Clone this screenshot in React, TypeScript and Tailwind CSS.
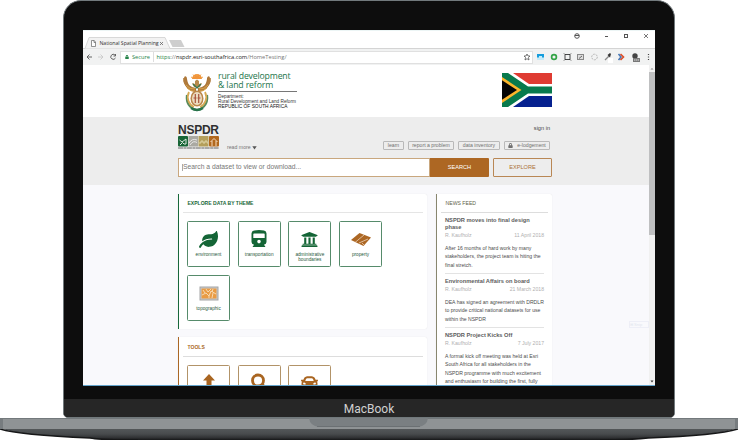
import React from "react";
import { FaLeaf, FaUniversity, FaCar, FaLock } from "react-icons/fa";

const sans = "font-['Liberation_Sans',Arial,sans-serif]";

function CoatOfArms() {
  return (
    <svg width="28" height="38" viewBox="0 0 28 38">
      <path d="M1 5 C1 1 4 2 4 5 C5 12 8 13 13 14 L13 18 C7 18 1 13 1 5Z M27 5 C27 1 24 2 24 5 C23 12 20 13 15 14 L15 18 C21 18 27 13 27 5Z" fill="#ad7638" />
      <path d="M1.500 4V7Q3 13 9 15M26.500 4V7Q25 13 19 15" stroke="#b07b3c" strokeWidth="2.600" fill="none" />
      <path d="M3 11 Q7 16 12 15 M25 11 Q21 16 16 15 M4 14 Q8 18 12 17 M24 14 Q20 18 16 17" stroke="#d9a54b" strokeWidth="1" fill="none" />
      <path d="M9 5 A5 5 0 0 1 19 5Z" fill="#f0933a" />
      <path d="M8 3 L10 4 M10 0.5 L11.5 3 M14 0 V2 M18 0.5 L16.500 3 M20 3 L18 4" stroke="#f2a650" strokeWidth="1" />
      <path d="M12 7 L14 5.500 L16 7 L16 10 L19 9 L17 13 L11 13 L9 9 L12 10Z" fill="#b8894a" />
      <path d="M10 10 L14 14 L18 10" stroke="#35764f" strokeWidth="1.300" fill="none" />
      <path d="M4 21 C3 29 6 34 14 36 C22 34 25 29 24 21" stroke="#5a8b5d" strokeWidth="2.200" fill="none" />
      <path d="M6 18 C3 24 6 31 11 33 M22 18 C25 24 22 31 17 33" stroke="#d6aa54" strokeWidth="1.800" fill="none" />
      <ellipse cx="14" cy="24.500" rx="6.500" ry="8" fill="#bb884c" />
      <ellipse cx="14" cy="24.500" rx="5" ry="6.500" fill="#ecdcc0" />
      <path d="M12.300 20 V29 M15.700 20 V29 M10.500 24 H13.500 M14.500 24 H17.500" stroke="#a8543c" strokeWidth="1.200" />
      <path d="M8 34 Q14 38 20 34" stroke="#28734b" strokeWidth="2.400" fill="none" />
    </svg>
  );
}

function Flag() {
  return (
    <svg width="50" height="34" viewBox="0 0 50 34">
      <rect width="50" height="34" fill="#fff" />
      <path d="M11 0H50V11H27Z" fill="#df3b32" />
      <path d="M11 34H50V23H27Z" fill="#06218f" />
      <path d="M0 0H6L26 13.500H50V20.500H26L6 34H0Z" fill="#087a4d" />
      <path d="M0 4L19.500 17L0 30Z" fill="#fcb52b" />
      <path d="M0 7.300L15 17L0 26.700Z" fill="#050505" />
    </svg>
  );
}

function ThemeGlyphs() {
  return (
    <svg width="41" height="13" viewBox="0 0 41 13">
      <rect width="10" height="10.500" rx="1" fill="#176536" />
      <rect x="10.500" width="9.500" height="10.500" fill="#aaa9a2" />
      <rect x="20.500" width="10" height="10.500" fill="#b49f5b" />
      <rect x="31" width="10" height="10.500" rx="1" fill="#b1681e" />
      <path d="M1.500 4L4 6L8 3V8H6L4.500 6.500L2 9" stroke="#dce9df" fill="none" strokeWidth="1" />
      <path d="M11 7Q14 2 19 4M12 9Q15 4 19 6.500" stroke="#eee" fill="none" strokeWidth=".9" />
      <path d="M21 7H23V5H25V7H27V5H29V7H30" stroke="#e9dfb8" fill="none" strokeWidth=".8" />
      <path d="M32.500 6L36 2.500L39.500 6M34 5V10M38 5V10" stroke="#f5dbc0" fill="none" strokeWidth="1" />
      <path d="M0 12H41" stroke="#444" strokeWidth=".8" strokeDasharray="5 .5 3 .4" />
    </svg>
  );
}

function TrainIcon() {
  return (
    <svg width="16" height="18" viewBox="0 0 16 18">
      <path fillRule="evenodd" d="M3 .5Q8 -.5 13 .5Q15.500 1 15.500 3.500V12Q15.500 14 13 14.700L14.500 17H1.500L3 14.700Q.5 14 .5 12V3.500Q.5 1 3 .5ZM3 3.500Q2.300 3.500 2.300 4.200V8H13.700V4.200Q13.700 3.500 13 3.500ZM8 9.800A1.800 1.800 0 1 0 8 13.400A1.800 1.800 0 1 0 8 9.800Z" fill="currentColor" />
    </svg>
  );
}

function PropertyIcon() {
  return (
    <svg width="20" height="13" viewBox="0 0 20 13">
      <path d="M0 7L8.500 0L20 4.500L12.500 13Z" fill="#ac6724" />
      <path d="M4 9.500L13 2M8 10L17 6M11 10L13 12" stroke="#f5e1ce" strokeWidth=".7" />
    </svg>
  );
}

function MapIcon() {
  return (
    <svg width="20" height="15" viewBox="0 0 20 15">
      <rect x=".5" y=".5" width="19" height="14" fill="#a6a6a6" />
      <rect x="1.500" y="1.500" width="17" height="12" fill="#c8c8c8" />
      <rect x="2.500" y="2.500" width="15" height="10" fill="#e99b44" />
      <path d="M3 9L7 7L10 10L12 5L17 8M7 3L9 6L12 3M10 10V12M14 3L13 6M4 4L6 7M14 7L13 12" stroke="#fae9cc" strokeWidth=".8" fill="none" />
    </svg>
  );
}

function Tile({ label, icon, brown = false }: { label?: React.ReactNode; icon: React.ReactNode; brown?: boolean }) {
  return (
    <div className={`flex h-[46px] w-[43px] shrink-0 flex-col items-center rounded-[1.5px] border bg-white ${brown ? "border-[#b29368] text-[#a96521]" : "border-[#568b6b] text-[#146536]"}`}>
      <div className="mt-[7px] flex h-[20px] items-center">{icon}</div>
      {label && <div className="mt-[2.500px] text-center text-[4.700px] leading-[5px] whitespace-nowrap text-[#28573a]">{label}</div>}
    </div>
  );
}

function Chip({ children, className }: { children: React.ReactNode; className: string }) {
  return <div className={`flex h-[9px] items-center justify-center rounded-[1px] border border-[#b9b9b9] text-[5.150px] leading-[7px] whitespace-nowrap text-[#707070] ${className}`}>{children}</div>;
}

function News({ title, date, lines, first = false }: { title: React.ReactNode; date: string; lines: string[]; first?: boolean }) {
  return (
    <article className={`mx-[8px] pt-[4px] ${first ? "" : "border-t border-[#e3e3e3]"}`}>
      <h3 className="text-[5.700px] leading-[6.500px] font-bold whitespace-nowrap text-[#5d5d5d]">{title}</h3>
      <div className="flex h-[11px] items-center justify-between pt-[1px] text-[5.150px] whitespace-nowrap text-[#b0b0b0]"><span>R. Kaufholz</span><span>{date}</span></div>
      <div className="mt-[2.500px] pb-[3.500px] text-[5.120px] leading-[8.500px] whitespace-nowrap text-[#4c4c4c]">
        {lines.map((line) => <div key={line}>{line}</div>)}
      </div>
    </article>
  );
}

function BrowserChrome() {
  return (
    <div className="h-[35px] shrink-0">
      <div className="relative flex h-[19px] bg-white">
        <svg className="absolute left-0 top-0" width="572" height="19" viewBox="0 0 572 19">
          <path d="M0 .5H572" stroke="#ecf5f5" />
          <path d="M0 18.500H2L6 7.500H82L87 18.500H572V19H0Z" fill="#f2f2f2" stroke="#cfcfcf" strokeWidth=".8" />
          <path d="M86 10H98L101.500 17H89.500Z" fill="#cecece" />
          <path d="M8.500 10.500V16.500H12.500V12L11.200 10.500ZM11 10.500V12.500H12.500" fill="#fff" stroke="#666" strokeWidth=".7" />
          <path d="M77 12L80 15M80 12L77 15" stroke="#666" strokeWidth=".8" />
          <circle cx="494" cy="6" r="2.300" fill="none" stroke="#555" />
          <path d="M492 5.500H496M522 6.500H525" stroke="#555" />
          <rect x="541.500" y="4.500" width="3" height="3" fill="none" stroke="#555" />
          <path d="M561 4L565 8M565 4L561 8" stroke="#555" strokeWidth=".8" />
        </svg>
        <div className="relative mt-[9px] ml-[16.500px] h-[9px] w-[58px] text-[5.250px] leading-[9px] tracking-[-0.08px] whitespace-nowrap text-[#333] font-['Open_Sans',sans-serif]">National Spatial Planning</div>
      </div>
      <div className="flex h-[16px] items-center bg-[#f1f2f2]">
        <svg width="38" height="16" viewBox="0 0 38 16" fill="none">
          <path d="M4 8H9M6.500 5.500L4 8L6.500 10.500" stroke="#555" strokeWidth=".9" />
          <path d="M15 8H20M17.500 5.500L20 8L17.500 10.500" stroke="#c8c8c8" strokeWidth=".9" />
          <path d="M32 6A2.500 2.500 0 1 0 32.500 9M32.500 5V7H30.500" stroke="#555" strokeWidth=".9" />
        </svg>
        <div className="flex h-[11px] w-[411px] items-center bg-white pl-[4px] font-['Open_Sans',sans-serif] text-[5.700px] leading-[10px] whitespace-nowrap outline-1 outline-[#e0e0e0]">
          <FaLock className="size-[4px] text-[#258348]" />
          <span className="ml-[3px] w-[19px] text-[#258348]">Secure</span>
          <span className="ml-[2px] border-l border-[#ddd] pl-[2.500px] text-[5.700px] text-[#777]"><span className="text-[#258348]">https</span>://<span className="text-[#222]">nspdr.esri-southafrica.com</span>/HomeTesting/</span>
          <svg className="ml-auto mr-[1px]" width="8" height="8" viewBox="0 0 8 8"><path d="M4 1L5 3H7L5.500 4.500L6 7L4 5.700L2 7L2.500 4.500L1 3H3Z" fill="none" stroke="#555" strokeWidth=".8" /></svg>
        </div>
        <svg width="123" height="16" viewBox="0 0 123 16">
          <path d="M5 5H12V11H5Z" fill="#c5ebf8" /><path d="M5 5H12V8.500H10V7H7V8.500H5Z" fill="#159ddd" />
          <circle cx="22" cy="8" r="2.400" fill="none" stroke="#34a447" strokeWidth="1.700" />
          <path d="M33 5.500H38V10.500H33ZM32 4.500L33 5.500M39 4.500L38 5.500M32 11.500L33 10.500M39 11.500L38 10.500" fill="none" stroke="#333" strokeWidth=".9" />
          <rect x="45.500" y="5.500" width="6" height="5" fill="#ddd" stroke="#888" /><path d="M47 9.500L50 7" stroke="#666" />
          <circle cx="62.500" cy="8" r="2.800" fill="none" stroke="#aaa" strokeWidth=".8" strokeDasharray="2 .8" />
          <path d="M73 11L77 7" stroke="#888" strokeWidth="1.300" /><path d="M75.500 6L78 8.500L79 5L78 4Z" fill="#333" /><path d="M76 9H81V14H76Z" fill="#fff" />
          <path d="M86.500 5L89 8L86.500 11" fill="none" stroke="#4777b5" strokeWidth="1.600" /><path d="M88.500 5L91.500 8L88.500 11" fill="none" stroke="#df4c25" strokeWidth="1.600" />
          <circle cx="103" cy="7" r="2.700" fill="#444" /><rect x="101" y="9" width="7" height="4" rx=".5" fill="#777" /><path d="M102 11H107" stroke="#ddd" strokeDasharray="1.500 .5" />
          <path d="M116.500 5V6M116.500 7.500V8.500M116.500 10V11" stroke="#444" strokeWidth="1.200" />
        </svg>
      </div>
    </div>
  );
}

function Page() {
  return (
    <div className="flex h-[320px] bg-[#f9f9fc]">
      <div className="flex w-[566px] shrink-0 flex-col">
        <header className="flex h-[52px] shrink-0 items-start bg-white pl-[100px]">
          <div className="mt-[9px] w-[35px]"><CoatOfArms /></div>
          <div className="mt-[7px] w-[79px] whitespace-nowrap">
            <div className="font-['Open_Sans',sans-serif] text-[8.700px] leading-[9px] font-medium text-[#22754a]"><div className="tracking-[-0.16px]">rural development</div><div className="tracking-[-0.12px]">&amp; land reform</div></div>
            <div className="mt-px border-t border-[#777] pt-[2px] text-[4.720px] leading-[5.200px] text-[#333]"><div>Department:</div><div>Rural Development and Land Reform</div><div className="text-[4.850px] font-medium text-[#111]" >REPUBLIC OF SOUTH AFRICA</div></div>
          </div>
          <div className="mt-[8px] ml-[205px]"><Flag /></div>
        </header>
        <section className="h-[68px] shrink-0 bg-[#ededed] pr-[97px] pl-[95px]">
          <div className="flex h-[41px] justify-between">
            <div className="flex">
              <div className="w-[41px] pt-[8px]"><div className="text-[12px] leading-[11px] font-bold tracking-[-0.25px] text-[#303030]">NSPDR</div><ThemeGlyphs /></div>
              <div className="mt-[27px] ml-[8px] flex h-[7px] items-center text-[5.200px] text-[#777]">read more<svg className="ml-[1.500px]" width="5" height="4" viewBox="0 0 5 4"><path d="M.3 .3H4.700L2.500 3.500Z" fill="#555" /></svg></div>
            </div>
            <div className="flex flex-col items-end pt-[8px] pr-[2px]">
              <div className="text-[5.600px] leading-[7px] text-[#444]">sign in</div>
              <div className="mt-[9px] flex gap-[4px]">
                <Chip className="w-[21px]">learn</Chip><Chip className="w-[46px]">report a problem</Chip><Chip className="w-[42px]">data inventory</Chip><Chip className="w-[46px]"><FaLock className="mr-[4px] size-[5px]" />e-lodgement</Chip>
              </div>
            </div>
          </div>
          <div className="flex h-[19px] w-[374px]">
            <div className="flex w-[252px] items-center border border-[#c9a77e] bg-white pl-[3px] text-[6.750px] text-[#777]"><span className="h-[7px] w-px bg-[#aaa]" />Search a dataset to view or download...</div>
            <div className="flex w-[59px] items-center justify-center rounded-r-[1px] bg-[#ad6723] text-[5.600px] text-white">SEARCH</div>
            <div className="ml-[4px] flex w-[59px] items-center justify-center rounded-[1px] border border-[#b98754] text-[5.600px] text-[#ac7137]">EXPLORE</div>
          </div>
        </section>
        <main className="flex min-h-0 flex-1 gap-[9px] overflow-hidden pt-[9px] pl-[95px]">
          <div className="w-[249px] shrink-0">
            <section className="h-[135px] rounded-r-[2px] border-l border-[#17683b] bg-white shadow-[0_0_1px_#ddd]">
              <h2 className="ml-[8.500px] h-[18px] pt-[5px] text-[5.050px] leading-[8px] font-bold text-[#176638]">EXPLORE DATA BY THEME</h2>
              <div className="mx-[4px] border-t border-[#e5e5e5]" />
              <div className="mt-[8px] ml-[8px] flex flex-wrap gap-x-[7.700px] gap-y-[8px]">
                <Tile label="environment" icon={<FaLeaf size={19} />} /><Tile label="transportation" icon={<TrainIcon />} /><Tile label={<>administrative<br />boundaries</>} icon={<FaUniversity size={17} />} /><Tile label="property" icon={<PropertyIcon />} /><Tile label="topographic" icon={<MapIcon />} />
              </div>
            </section>
            <section className="mt-[8px] h-[80px] rounded-r-[2px] border-l border-[#aa6725] bg-white shadow-[0_0_1px_#ddd]">
              <h2 className="ml-[8.500px] h-[19px] pt-[6px] text-[5.050px] leading-[8px] font-bold text-[#aa6725]">TOOLS</h2>
              <div className="mx-[4px] border-t border-[#ddd]" />
              <div className="mt-[8px] ml-[8px] flex gap-[7.700px]">
                <Tile brown icon={<svg width="12" height="18" viewBox="0 0 12 18"><path d="M6 0L12 6.500H8.500V18H3.500V6.500H0Z" fill="currentColor" /></svg>} />
                <Tile brown icon={<svg width="16" height="20" viewBox="0 0 16 20"><circle cx="7" cy="7.500" r="5.500" stroke="currentColor" strokeWidth="2.800" fill="none" /><path d="M11 11L15 16" stroke="currentColor" strokeWidth="3" /></svg>} />
                <Tile brown icon={<FaCar size={17} className="mb-[2px]" />} />
              </div>
            </section>
          </div>
          <section className="h-[220px] w-[116px] shrink-0 rounded-r-[2px] border-l border-[#88866f] bg-white shadow-[0_0_1px_#ddd]">
            <h2 className="ml-[8.500px] h-[18px] pt-[5px] text-[5.150px] leading-[8px] text-[#625f49]">NEWS FEED</h2>
            <div className="mx-[4px] border-t border-[#ddd]" />
            <News first title={<>NSPDR moves into final design<br />phase</>} date="11 April 2018" lines={["After 16 months of hard work by many", "stakeholders, the project team is hiting the", "final stretch."]} />
            <News title="Environmental Affairs on board" date="21 March 2018" lines={["DEA has signed an agreement with DRDLR", "to provide critical national datasets for use", "within the NSPDR"]} />
            <News title="NSPDR Project Kicks Off" date="7 July 2017" lines={["A formal kick off meeting was held at Esri", "South Africa for all stakeholders in the", "NSPDR programme with much excitement", "and enthusiasm for building the first, fully"]} />
          </section>
          <div className="mt-[127px] ml-[68px] h-[7px] w-[25px] border border-[#eeeff7] text-[4px] leading-[5px] text-[#e1e6ee]">⊞ Snip</div>
        </main>
      </div>
      <div className="flex w-[6px] flex-col bg-[#f1f1f1]">
        <svg width="6" height="7" viewBox="0 0 6 7"><path d="M1.500 4.500L3 3L4.500 4.500Z" fill="#888" /></svg>
        <div className="h-[163px] bg-[#bfc0c1]" />
        <svg className="mt-auto" width="6" height="7" viewBox="0 0 6 7"><path d="M1.500 2.500L3 4.500L4.500 2.500Z" fill="#333" /></svg>
      </div>
    </div>
  );
}

export default function App() {
  return (
    <div className={`h-[440px] w-[738px] overflow-hidden bg-white ${sans}`}>
      <div className="ml-[63px] flex h-[418px] w-[612px] flex-col overflow-hidden rounded-t-[18px] rounded-b-[5px] border border-[#71797c] bg-[#0d0d0d]">
        <div className="mt-[29px] ml-[19px] h-[356px] w-[572px] shrink-0 overflow-hidden border-b border-[#64a4cb] bg-white"><BrowserChrome /><Page /></div>
        <div className="mt-[13px] flex flex-1 items-center justify-center bg-[#262626] pt-px font-['Roboto',sans-serif] text-[12px] leading-[18px] text-[#d1d1d1]">MacBook</div>
      </div>
      <svg className="block" width="738" height="22" viewBox="0 0 738 22">
        <defs><linearGradient id="underside" x1="0" y1="0" x2="0" y2="1"><stop stopColor="#55595b" /><stop offset=".5" stopColor="#484b4d" /><stop offset=".8" stopColor="#303234" /><stop offset="1" stopColor="#161718" /></linearGradient></defs>
        <path d="M0 10H738C725 15 700 18 648 20Q630 22 600 22H138Q100 22 90 20C40 18 12 15 0 10Z" fill="url(#underside)" />
        <path d="M0 11C12 15 40 18 90 20Q100 22 138 22M738 11C725 15 700 18 648 20Q630 22 600 22" stroke="#161718" strokeWidth="1.500" fill="none" />
        <rect width="738" height="11" fill="#8f9395" /><path d="M0 .5H738" stroke="#73797c" /><path d="M0 1H3V11H0ZM735 1H738V11H735Z" fill="#777c7f" />
        <path d="M309 0H428Q427 8 418 9H319Q310 8 309 0Z" fill="#7a7f82" /><path d="M317 8.500H420" stroke="#6b7073" />
      </svg>
    </div>
  );
}
